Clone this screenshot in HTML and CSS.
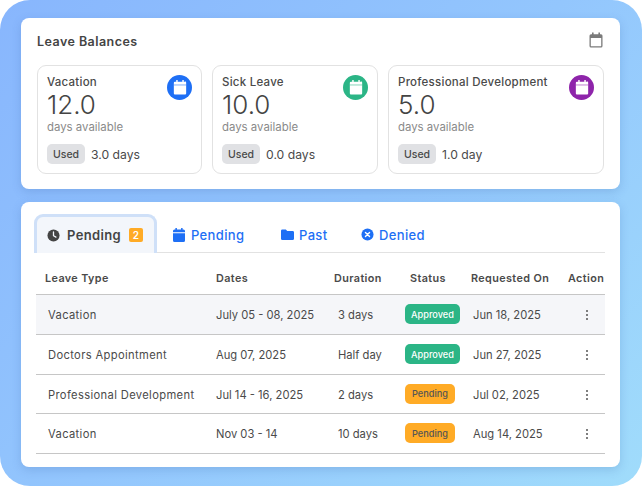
FILE: index.html
```html
<!DOCTYPE html>
<html lang="en">
<head>
<meta charset="utf-8">
<title>Leave Balances</title>
<link rel="stylesheet" href="styles.css">
</head>
<body>
<svg width="0" height="0" class="defs">
  <symbol id="cal-in" viewBox="0 0 16 18"><path d="M3.500 0h1.700v2h5.600V0h1.700v2h1A1.500 1.500 0 0 1 15.500 3.500v12.500a1.500 1.500 0 0 1-1.500 1.500H2A1.500 1.500 0 0 1 .5 16V3.500A1.500 1.500 0 0 1 2 2h1.500z" fill="#fff"/><rect x=".5" y="5.200" width="15" height="1.500" fill="currentColor" opacity=".45"/></symbol>
</svg>
<main class="frame">
  <section class="panel balances">
    <header class="balances-head">
      <h1>Leave Balances</h1>
      <svg class="head-icon" viewBox="0 0 14 16"><path d="M3 .5h1.600v1.700h4.800V.5H11v1.700h1A1.500 1.500 0 0 1 13.500 3.700v10.300a1.500 1.500 0 0 1-1.500 1.500H2A1.500 1.500 0 0 1 .5 14V3.700A1.500 1.500 0 0 1 2 2.200h1zM1.800 6v8c0 .1.100.2.200.2h10c.1 0 .2-.1.200-.2V6z" fill="#7b7b7b" fill-rule="evenodd"/></svg>
    </header>
    <div class="cards">
      <article class="card card-a">
        <div class="badge-icon blue"><svg class="in" viewBox="0 0 16 18"><use href="#cal-in"/></svg></div>
        <h2>Vacation</h2>
        <p class="num">12.0</p>
        <p class="sub">days available</p>
        <p class="used"><span class="chip">Used</span><span>3.0 days</span></p>
      </article>
      <article class="card card-b">
        <div class="badge-icon green"><svg class="in" viewBox="0 0 16 18"><use href="#cal-in"/></svg></div>
        <h2>Sick Leave</h2>
        <p class="num">10.0</p>
        <p class="sub">days available</p>
        <p class="used"><span class="chip">Used</span><span>0.0 days</span></p>
      </article>
      <article class="card card-c">
        <div class="badge-icon purple"><svg class="in" viewBox="0 0 16 18"><use href="#cal-in"/></svg></div>
        <h2>Professional Development</h2>
        <p class="num">5.0</p>
        <p class="sub">days available</p>
        <p class="used"><span class="chip">Used</span><span>1.0 day</span></p>
      </article>
    </div>
  </section>

  <section class="panel requests">
    <nav class="tabs">
      <a class="tab active">
        <svg class="tab-icon" viewBox="0 0 14 14"><circle cx="7" cy="7" r="6.500" fill="#444"/><path d="M7 3.200v4l2.600 1.600" stroke="#f3f6fb" stroke-width="1.400" fill="none" stroke-linecap="round"/></svg>
        <span>Pending</span><span class="count">2</span>
      </a>
      <a class="tab t-pending">
        <svg class="tab-icon" viewBox="0 0 12 14"><path d="M2.400 0h1.500v1.500h4.200V0h1.500v1.500h.9A1.500 1.500 0 0 1 12 3v1.300H0V3a1.500 1.500 0 0 1 1.500-1.500h.9zM0 5.300h12V12.500a1.500 1.500 0 0 1-1.500 1.500h-9A1.500 1.500 0 0 1 0 12.500z" fill="#1e6ff5"/></svg>
        <span>Pending</span>
      </a>
      <a class="tab t-past">
        <svg class="tab-icon wide" viewBox="0 0 14 12"><path d="M1.500 .5h3.700l1.500 1.700h5.800A1.500 1.500 0 0 1 14 3.700v6.800A1.500 1.500 0 0 1 12.500 12h-11A1.500 1.500 0 0 1 0 10.500V2A1.500 1.500 0 0 1 1.500 .5z" fill="#1e6ff5"/></svg>
        <span>Past</span>
      </a>
      <a class="tab t-denied">
        <svg class="tab-icon wide" viewBox="0 0 14 14"><circle cx="7" cy="7" r="6.500" fill="#1e6ff5"/><path d="M4.800 4.800l4.400 4.400M9.200 4.800l-4.400 4.400" stroke="#fff" stroke-width="1.500" stroke-linecap="round"/></svg>
        <span>Denied</span>
      </a>
    </nav>
    <table class="leave-table">
      <colgroup>
        <col class="c1"><col class="c2"><col class="c3"><col class="c4"><col class="c5"><col class="c6">
      </colgroup>
      <thead>
        <tr><th>Leave Type</th><th>Dates</th><th>Duration</th><th>Status</th><th>Requested On</th><th>Action</th></tr>
      </thead>
      <tbody>
        <tr class="hl"><td>Vacation</td><td>July 05 - 08, 2025</td><td>3 days</td><td><span class="st ok">Approved</span></td><td>Jun 18, 2025</td><td><span class="dots"><i></i><i></i><i></i></span></td></tr>
        <tr><td>Doctors Appointment</td><td>Aug 07, 2025</td><td>Half day</td><td><span class="st ok">Approved</span></td><td>Jun 27, 2025</td><td><span class="dots"><i></i><i></i><i></i></span></td></tr>
        <tr><td>Professional Development</td><td>Jul 14 - 16, 2025</td><td>2 days</td><td><span class="st wait">Pending</span></td><td>Jul 02, 2025</td><td><span class="dots"><i></i><i></i><i></i></span></td></tr>
        <tr><td>Vacation</td><td>Nov 03 - 14</td><td>10 days</td><td><span class="st wait">Pending</span></td><td>Aug 14, 2025</td><td><span class="dots"><i></i><i></i><i></i></span></td></tr>
      </tbody>
    </table>
  </section>
</main>
</body>
</html>
```
FILE: styles.css
```css
* { box-sizing: border-box; }
html, body { margin: 0; padding: 0; background: #fff; }
body { width: 642px; height: 486px; overflow: hidden; font-family: Inter, "Liberation Sans", sans-serif; color: #444; }
.defs { position: absolute; }
h1, h2, p { margin: 0; }

.frame {
  width: 642px; height: 486px; padding: 18px 21px 19px;
  border-radius: 30px;
  background: linear-gradient(135deg, #88b6fd 0%, #93c6fd 50%, #a0dcfb 100%);
  display: flex; flex-direction: column; gap: 13px;
}
.panel { background: #fff; border-radius: 8px; box-shadow: 0 3px 10px rgba(60,100,170,.22); width: 599px; }

.balances { height: 171px; padding: 0 16px; }
.balances-head { height: 47px; display: flex; align-items: center; justify-content: space-between; }
.balances-head h1 { font-size: 12.500px; font-weight: 600; letter-spacing: .45px; color: #444; }
.head-icon { width: 14px; height: 16px; margin-right: 1px; margin-top: -3px; }

.cards { display: flex; gap: 10px; }
.card { position: relative; height: 109px; border: 1px solid #e2e2e2; border-radius: 9px; padding: 9px 9px 0; }
.card-a { width: 165px; }
.card-b { width: 166px; }
.card-c { width: 216px; }
.card h2 { font-size: 11.500px; font-weight: 500; line-height: 14px; letter-spacing: .25px; color: #4a4a4a; }
.num { font-size: 26px; font-weight: 300; line-height: 31px; color: #444; }
.sub { font-size: 11.400px; line-height: 14px; color: #8a8a8a; }
.used { display: flex; align-items: center; gap: 6px; margin-top: 10px; font-size: 12.200px; color: #4a4a4a; }
.chip { width: 38px; height: 20px; display: flex; align-items: center; justify-content: center; background: #e0e1e4; border-radius: 5px; font-size: 10.500px; font-weight: 500; color: #4a4a4a; }
.badge-icon { position: absolute; top: 9px; right: 9px; width: 25px; height: 25px; border-radius: 50%; display: flex; align-items: center; justify-content: center; }
.badge-icon .in { width: 14px; height: 15px; }
.blue { background: #1e6ff5; color: #1e6ff5; }
.green { background: #2bb586; color: #2bb586; }
.purple { background: #8e24aa; color: #8e24aa; }

.requests { height: 265px; padding: 12px 15px 0 13px; }
.tabs { display: flex; height: 39px; width: 571px; border-bottom: 1px solid #e2e2e2; }
.tab { display: flex; align-items: center; padding-top: 3px; font-size: 13px; font-weight: 500; letter-spacing: .35px; color: #1e6ff5; }
.tab.active { width: 123px; height: 39px; padding: 0 0 0 10px; border: 3px solid #cfe0f8; border-bottom: 0; border-radius: 9px 9px 0 0; background: #f3f6fb; color: #444; font-weight: 600; }
.active .tab-icon { width: 13px; height: 13px; margin-right: 7px; }
.count { width: 14px; height: 14px; margin-left: 8px; background: #ffab26; color: #fff; border-radius: 2px; font-size: 10px; display: flex; align-items: center; justify-content: center; }
.tab-icon { width: 12px; height: 14px; margin-right: 6px; }
.tab-icon.wide { width: 13px; height: 13px; margin-right: 5px; }
.t-pending { margin-left: 16px; width: 108px; }
.t-past { width: 80px; }

.leave-table { margin-left: 2px; width: 569px; table-layout: fixed; border-collapse: collapse; font-size: 11.200px; color: #4a4a4a; }
.c1 { width: 171px; } .c2 { width: 118px; } .c3 { width: 71px; } .c4 { width: 68px; } .c5 { width: 96px; } .c6 { width: 45px; }
th { height: 41px; padding: 10px 0 0 9px; text-align: left; font-size: 10.800px; font-weight: 600; letter-spacing: .4px; color: #4a4a4a; border-bottom: 1px solid #c6c6c6; white-space: nowrap; overflow: hidden; }
td { height: 40px; padding: 2px 0 0 9px; border-bottom: 1px solid #c6c6c6; white-space: nowrap; }
tbody tr:nth-child(n+3) td { height: 39.500px; }
td:nth-child(1) { padding-left: 12px; letter-spacing: .35px; }
td:nth-child(3) { padding-left: 13px; }
td:nth-child(4) { padding-top: 0; }
th:nth-child(4) { padding-left: 14px; }
th:nth-child(5) { padding-left: 7px; }
th:nth-child(6) { padding-left: 8px; }
.hl td { background: #f5f6f9; }
.st { display: inline-flex; align-items: center; justify-content: center; height: 20px; border-radius: 5px; font-size: 9.200px; font-weight: 500; }
.ok { width: 55px; background: #2bb586; color: #fff; }
.wait { width: 50px; background: #ffab26; color: #555; }
.dots { display: flex; flex-direction: column; align-items: center; gap: 2px; width: 3px; margin-left: 16px; }
.dots i { width: 2px; height: 2px; background: #555; border-radius: 50%; }
```
